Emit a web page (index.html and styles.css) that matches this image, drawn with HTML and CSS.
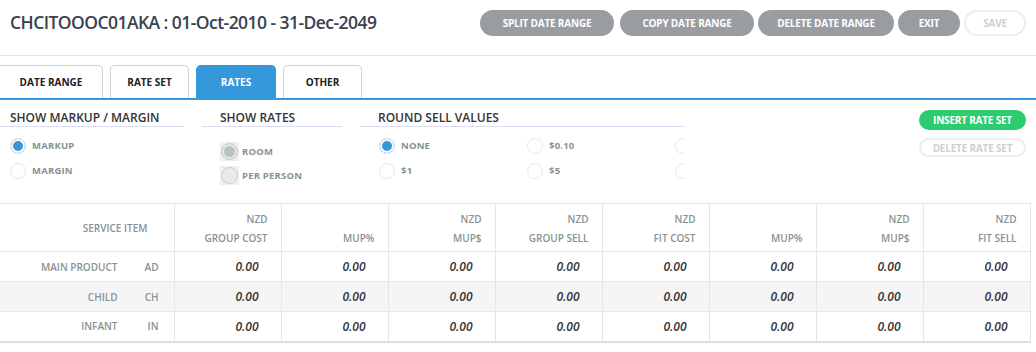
FILE: index.html
```html
<!DOCTYPE html>
<html lang="en">
<head>
    <meta charset="UTF-8">
    <title>Rates</title>
    <link rel="stylesheet" href="styles.css">
</head>
<body>
    <div class="page-header">
        <h1 class="title">CHCITOOOC01AKA : 01-Oct-2010 - 31-Dec-2049</h1>
        <div class="actions">
            <button class="btn btn-grey btn-split">SPLIT DATE RANGE</button>
            <button class="btn btn-grey btn-copy">COPY DATE RANGE</button>
            <button class="btn btn-grey btn-delete">DELETE DATE RANGE</button>
            <button class="btn btn-grey btn-small">EXIT</button>
            <button class="btn btn-off btn-small">SAVE</button>
        </div>
    </div>

    <div class="tabs">
        <div class="tab tab-date">DATE RANGE</div>
        <div class="tab tab-set">RATE SET</div>
        <div class="tab tab-active">RATES</div>
        <div class="tab tab-other">OTHER</div>
    </div>

    <div class="options">
        <div class="group group-markup">
            <h3>SHOW MARKUP / MARGIN</h3>
            <label class="opt"><span class="radio on"></span>MARKUP</label>
            <label class="opt"><span class="radio"></span>MARGIN</label>
        </div>
        <div class="group group-rates">
            <h3>SHOW RATES</h3>
            <label class="opt"><span class="radio-box"><span class="radio dis on"></span></span>ROOM</label>
            <label class="opt"><span class="radio-box"><span class="radio dis"></span></span>PER PERSON</label>
        </div>
        <div class="group group-round">
            <h3>ROUND SELL VALUES</h3>
            <div class="round-grid">
                <label class="opt"><span class="radio on"></span>NONE</label>
                <label class="opt"><span class="radio"></span>$0.10</label>
                <label class="opt"><span class="radio"></span></label>
                <label class="opt"><span class="radio"></span>$1</label>
                <label class="opt"><span class="radio"></span>$5</label>
                <label class="opt"><span class="radio"></span></label>
            </div>
        </div>
        <div class="side-actions">
            <button class="btn btn-green">INSERT RATE SET</button>
            <button class="btn btn-off btn-thin">DELETE RATE SET</button>
        </div>
    </div>

    <table class="rates">
        <thead>
            <tr>
                <th class="svc-head">SERVICE ITEM</th>
                <th>NZD<br>GROUP COST</th>
                <th><br>MUP%</th>
                <th>NZD<br>MUP$</th>
                <th>NZD<br>GROUP SELL</th>
                <th>NZD<br>FIT COST</th>
                <th><br>MUP%</th>
                <th>NZD<br>MUP$</th>
                <th>NZD<br>FIT SELL</th>
            </tr>
        </thead>
        <tbody>
            <tr>
                <td class="svc"><span class="svc-name">MAIN PRODUCT</span><span class="svc-code">AD</span></td>
                <td>0.00</td><td>0.00</td><td>0.00</td><td>0.00</td><td>0.00</td><td>0.00</td><td>0.00</td><td>0.00</td>
            </tr>
            <tr class="alt">
                <td class="svc"><span class="svc-name">CHILD</span><span class="svc-code">CH</span></td>
                <td>0.00</td><td>0.00</td><td>0.00</td><td>0.00</td><td>0.00</td><td>0.00</td><td>0.00</td><td>0.00</td>
            </tr>
            <tr>
                <td class="svc"><span class="svc-name">INFANT</span><span class="svc-code">IN</span></td>
                <td>0.00</td><td>0.00</td><td>0.00</td><td>0.00</td><td>0.00</td><td>0.00</td><td>0.00</td><td>0.00</td>
            </tr>
        </tbody>
    </table>
</body>
</html>
```

FILE: styles.css
```css
:root {
    --blue: #3498db;
    --green: #2ecc71;
    --grey-btn: #999da1;
    --text-dark: #3a4150;
    --text-grey: #879292;
    --line: #e6e6e6;
}

* {
    margin: 0;
    padding: 0;
    box-sizing: border-box;
}

body {
    font-family: 'Open Sans', 'Noto Sans', sans-serif;
    background: #fff;
    color: #333;
    width: 1036px;
    overflow: hidden;
}

/* Header */
.page-header {
    display: flex;
    justify-content: space-between;
    align-items: flex-start;
    height: 56px;
    padding: 10px 10px 0 10px;
    border-bottom: 1px solid #e2e2ea;
}

.title {
    font-size: 17.5px;
    font-weight: 600;
    color: var(--text-dark);
    line-height: 24px;
    letter-spacing: -0.55px;
}

.actions {
    display: flex;
    gap: 4px;
}

.btn {
    font-family: inherit;
    font-size: 10px;
    font-weight: 700;
    border-radius: 14px;
    height: 26px;
    border: none;
    color: #fff;
    letter-spacing: -0.2px;
}

.btn-grey {
    background: var(--grey-btn);
}

.btn-split { width: 134px; margin-right: 2px; }
.btn-copy { width: 134px; }
.btn-delete { width: 136px; }
.btn-small { width: 62px; }

.btn-off {
    background: #fff;
    border: 2px solid #eaeeee;
    color: #cdd0d2;
}

/* Tabs */
.tabs {
    display: flex;
    gap: 7px;
    margin-top: 9px;
    border-bottom: 2px solid var(--blue);
}

.tab {
    height: 33px;
    line-height: 32px;
    font-size: 10px;
    font-weight: 700;
    color: #222;
    text-align: center;
    border: 1px solid #cfcfcf;
    border-bottom: none;
    border-radius: 5px 5px 0 0;
}

.tab-date { width: 103px; border-left: none; border-top-left-radius: 0; }
.tab-set { width: 79px; }
.tab-other { width: 79px; }

.tab-active {
    width: 80px;
    background: var(--blue);
    border-color: var(--blue);
    color: #fff;
}

/* Options */
.options {
    display: flex;
    height: 103px;
    padding-top: 9px;
}

.group h3 {
    font-size: 12px;
    font-weight: 600;
    color: #333;
    line-height: 17px;
    border-bottom: 1px solid #dcdcf2;
    margin-bottom: 6px;
}

.group-markup { width: 184px; }
.group-markup h3 { padding-left: 10px; }
.group-markup .opt { padding-left: 10px; }

.group-rates { width: 140px; margin-left: 18px; }
.group-rates h3 { padding-left: 18px; margin-bottom: 12px; }
.group-rates .opt { padding-left: 18px; height: 24px; gap: 3px; }

.group-round {
    width: 325px;
    margin-left: 18px;
    overflow: hidden;
}
.group-round h3 { padding-left: 18px; }

.round-grid {
    display: grid;
    grid-template-columns: 148px 148px 30px;
    padding-left: 19px;
}

.opt {
    display: flex;
    align-items: center;
    gap: 6px;
    height: 25px;
    font-size: 9.5px;
    font-weight: 700;
    color: var(--text-grey);
    letter-spacing: 0.2px;
}

.radio {
    width: 16px;
    height: 16px;
    border-radius: 50%;
    border: 1px solid #e9e9e9;
    background: #fff;
    flex-shrink: 0;
}

.radio.on {
    background: var(--blue);
    box-shadow: inset 0 0 0 2px #fff;
    border-color: #e4e4e4;
}

.radio-box {
    display: flex;
    align-items: center;
    justify-content: center;
    width: 19px;
    height: 19px;
    background: #efefef;
}

.radio.dis {
    width: 17px;
    height: 17px;
    border: 1px solid #c9d0cc;
    background: #eaeae4;
}

.radio.dis.on {
    background: #b4c4c4;
    box-shadow: inset 0 0 0 2px #eaeae4;
}

.side-actions {
    margin-left: auto;
    margin-right: 10px;
    display: flex;
    flex-direction: column;
    gap: 8px;
    padding-top: 1px;
}

.btn-green {
    background: var(--green);
    width: 107px;
    height: 20px;
    border-radius: 11px;
}

.btn-thin {
    width: 107px;
    height: 19px;
    border-radius: 11px;
}

/* Table */
.rates {
    width: 1030px;
    border-collapse: collapse;
    table-layout: fixed;
    border-top: 1px solid #e3e3e3;
    border-bottom: 2px solid #dedede;
}

.rates th,
.rates td {
    border-right: 1px solid var(--line);
    border-bottom: 1px solid var(--line);
    text-align: right;
}

.rates th {
    width: 107px;
    height: 48px;
    font-size: 10px;
    font-weight: 600;
    color: var(--text-grey);
    line-height: 19px;
    padding: 2px 13px 0 0;
}

.rates th.svc-head {
    width: 174px;
    padding-right: 26px;
    vertical-align: middle;
}

.rates td {
    height: 30px;
    font-size: 12px;
    font-weight: 600;
    font-style: italic;
    color: #333;
    padding-right: 22px;
}

.rates td.svc {
    font-style: normal;
    font-size: 10px;
    color: var(--text-grey);
    padding-right: 15px;
}

.svc-code {
    display: inline-block;
    width: 41px;
}

.rates tr.alt td {
    background: #f5f5f5;
}
```
